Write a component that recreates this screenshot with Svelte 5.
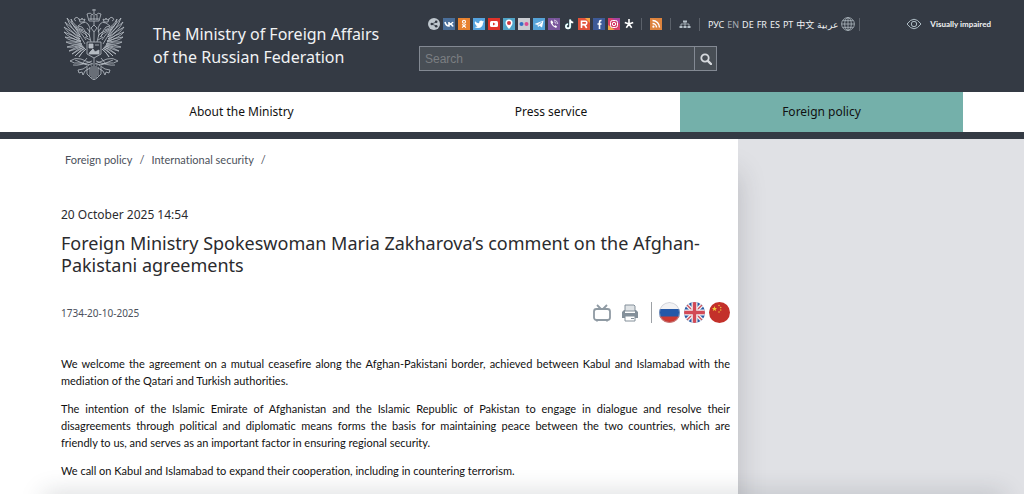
<script lang="ts">
  interface Social {
    name: string;
    bg: string;
  }

  const socials: Social[] = [
    { name: "Share", bg: "transparent" },
    { name: "VK", bg: "#4a6f9b" },
    { name: "Odnoklassniki", bg: "#e8822f" },
    { name: "Twitter", bg: "#55a3df" },
    { name: "YouTube", bg: "#e0332a" },
    { name: "Maps", bg: "#4fa3c7" },
    { name: "Flickr", bg: "#c9ccd2" },
    { name: "Telegram", bg: "#55a3d8" },
    { name: "Viber", bg: "#7a569c" },
    { name: "TikTok", bg: "transparent" },
    { name: "Rutube", bg: "#e2523a" },
    { name: "Facebook", bg: "#3d5a98" },
    { name: "Instagram", bg: "#d6406a" },
    { name: "All accounts", bg: "transparent" },
  ];

  const languages = ["РУС", "EN", "DE", "FR", "ES", "PT", "中文", "عربية"];

  const sections = [
    { title: "About the Ministry", active: false },
    { title: "Press service", active: false },
    { title: "Foreign policy", active: true },
  ];

  const crumbs = ["Foreign policy", "International security"];

  const paragraphs = [
    "We welcome the agreement on a mutual ceasefire along the Afghan-Pakistani border, achieved between Kabul and Islamabad with the mediation of the Qatari and Turkish authorities.",
    "The intention of the Islamic Emirate of Afghanistan and the Islamic Republic of Pakistan to engage in dialogue and resolve their disagreements through political and diplomatic means forms the basis for maintaining peace between the two countries, which are friendly\u00a0to us, and serves as an important factor in ensuring regional security.",
    "We call on Kabul and Islamabad to expand their cooperation, including in countering terrorism.",
  ];

  // feathers of the left wing: root and tip
  const feathers = [
    [17, 27, 4, 10],
    [17, 29, 2, 14],
    [17, 31, 1, 19],
    [18, 33, 1, 24],
    [18, 34, 2, 29],
    [19, 36, 3, 34],
    [19, 37, 4, 39],
    [20, 38, 6, 43],
    [21, 39, 9, 46],
    [22, 40, 12, 48],
    [23, 41, 16, 49],
  ];

  function feather([x1, y1, x2, y2]: number[]) {
    const mx = (x1 + x2) / 2;
    const my = (y1 + y2) / 2;
    return `M${x1} ${y1}Q${mx - 3} ${my + 2} ${x2} ${y2}Q${mx} ${my - 2} ${x1} ${y1}`;
  }

  let query = $state("");
</script>

{#snippet wing()}
  {#each feathers as f}
    <path d={feather(f)} />
  {/each}
  <path d="M8 11q1 8 9 12q5 2 8 6M8 11q4 8 12 11M13 21q6 4 10 11M16 26l6 10M10 17q6 5 12 7" />
  <path d="M15 18l4-3q4-2 6 1l2 4-1 6 2 8M15 18l4 1 3 4 2 6M17 14l-1-3 2 1 1-2 1 2 2-1-1 3z" />
  <path d="M16 11q-2-3-4-1t1 3M24 20l3 4M23 24l4 4M22 29l5 3" />
  <path d="M7 53q5-4 11-2l12 5M7 53q4 3 10 2l12 2M10 57q7 1 19-4M12 52l12 5M24 50l-5 6" />
  <path d="M26 57l-6 4-5 1 1 3 3-1 1 3 2-4 5-3M24 59v7l4 4 3 2M27 59v9M29 58v12" />
{/snippet}

<div class="page">
  <header>
    <a class="emblem" href="#home" aria-label="Home">
      <svg viewBox="0 0 62 72" fill="none" stroke="#b9bfc6" stroke-width="0.8">
        <g>{@render wing()}</g>
        <g transform="translate(62 0) scale(-1 1)">{@render wing()}</g>
        <path d="M26 13l-2-7q4-2 5 1 2-3 4 0 2-3 5-1l-2 7zM26 11h10M28 7v5M34 7v5M31 5V1M29 2h4M31 7v5M31 13v4l-3 3 3 4 3-4-3-3" />
        <path d="M24 34h14v12l-7 4-7-4zM31 50v22M31 24v10" />
        <path d="M26 36h4v4h-4zM32 37h4M27 44l3-3 2 3 4-2v4H26z" fill="#b4bac1" />
      </svg>
    </a>
    <a class="title" href="#home">The Ministry of Foreign Affairs<br />of the Russian Federation</a>

    <div class="tools">
      <div class="toolbar">
        <div class="socials">
          {#each socials as s (s.name)}
            <a class="social" href="#social" aria-label={s.name}>
              <svg viewBox="0 0 12 12" fill="none" stroke="#fff">
                <rect width="12" height="12" fill={s.bg} stroke="none" />
                {#if s.name === "Share"}
                  <circle cx="6" cy="6" r="6" fill="#bfc7ce" stroke="none" />
                  <path d="M8 4L4 6l4 2" stroke="#343a44" stroke-width="0.8" />
                  <g fill="#343a44" stroke="none"><circle cx="8.2" cy="3.7" r="1.3" /><circle cx="3.8" cy="6" r="1.3" /><circle cx="8.2" cy="8.3" r="1.3" /></g>
                {:else if s.name === "VK"}
                  <path d="M2 4q1 4 4 4V4M10 4q-1 2-4 2 3 0 4 2.5" stroke-width="1.6" />
                {:else if s.name === "Odnoklassniki"}
                  <circle cx="6" cy="3.7" r="1.5" stroke-width="1.1" />
                  <path d="M4 6.5q2 1.3 4 0M6 7.2L4.2 9.7M6 7.2l1.8 2.5" stroke-width="1.1" />
                {:else if s.name === "Twitter"}
                  <path d="M1.5 9q2 .1 3-.8-1.5-.3-1.7-1.5-1-.6-1-2 .1-1 .3-1.5 1.6 1.8 3.9 2 0-2.4 2-2.6 1 0 1.5.6l1.3-.4-.6 1 .8-.1-1 1Q10 9.8 5 10 3 10 1.5 9z" fill="#fff" stroke="none" />
                {:else if s.name === "YouTube"}
                  <rect x="2" y="3" width="8" height="6" rx="1.5" fill="#fff" stroke="none" />
                  <path d="M5 4.5v3L7.5 6z" fill="#e0332a" stroke="none" />
                {:else if s.name === "Maps"}
                  <path d="M6 11Q2.5 7 2.5 5a3.5 3.5 0 0 1 7 0Q9.5 7 6 11z" fill="#fff" stroke="none" />
                  <circle cx="6" cy="5" r="2" fill="#cf3940" stroke="none" />
                {:else if s.name === "Flickr"}
                  <circle cx="3.5" cy="6" r="2" fill="#3570c4" stroke="none" />
                  <circle cx="8.5" cy="6" r="2" fill="#dc4b91" stroke="none" />
                {:else if s.name === "Telegram"}
                  <path d="M1.5 6L10.5 2.5 9 9.5 6.3 7.7 5 9.3 4.5 7z" fill="#fff" stroke="none" />
                  <path d="M4.5 7l4.5-3.2-3.5 3.6" stroke="#55a3d8" stroke-width="0.5" />
                {:else if s.name === "Viber"}
                  <path d="M3 2.5q-1 1 0 3 1.6 3.2 4.5 4.2 1 .2 1.7-1L7.5 7.3l-1 .7Q5 7 4.5 5.5l.8-1L4 2.5z" fill="#fff" stroke="none" />
                  <path d="M6 2q3.5.5 3.8 4M6.2 3.8q1.5.3 1.8 2" stroke-width="0.7" />
                {:else if s.name === "TikTok"}
                  <path d="M7.3 1.5v6.8a2.1 2.1 0 1 1-2.1-2.1" stroke="#50c7cb" stroke-width="1.8" />
                  <path d="M7.1 1.5v6.8a2.1 2.1 0 1 1-2.1-2.1M7 2q.5 2.4 3.3 2.5" stroke-width="1.6" />
                {:else if s.name === "Rutube"}
                  <path d="M12 0H7l5 5z" fill="#f4a543" stroke="none" />
                  <path d="M3.5 10V3.2h4q1.3 0 1.3 1.6T7.5 6.6h-4M6.5 6.6L8.7 10" stroke-width="1.6" />
                {:else if s.name === "Facebook"}
                  <path d="M8.5 2.5H8Q6.5 2.5 6.5 4v7M4.5 6h4" stroke-width="1.6" />
                {:else if s.name === "Instagram"}
                  <path d="M0 7v5h7z" fill="#eea345" stroke="none" />
                  <path d="M4 0h8v6z" fill="#a643a1" stroke="none" />
                  <rect x="2.5" y="2.5" width="7" height="7" rx="2" /><circle cx="6" cy="6" r="1.7" />
                {:else}
                  <path d="M6 1v5M6 6L1.8 4.5M6 6l4.2-1.5M6 6l-2.7 3.7M6 6l2.7 3.7" stroke-width="1.6" />
                {/if}
              </svg>
            </a>
          {/each}
        </div>
        <a class="boxed" href="#rss" aria-label="RSS">
          <svg viewBox="0 0 12 12" fill="none" stroke="#fff" stroke-width="1.4">
            <rect width="12" height="12" fill="#dd833d" stroke="none" />
            <path d="M2.5 2.5a7 7 0 0 1 7 7M2.5 5.5a4 4 0 0 1 4 4" />
            <circle cx="3.4" cy="8.7" r="1.1" fill="#fff" stroke="none" />
          </svg>
        </a>
        <a class="boxed" href="#sitemap" aria-label="Site map">
          <svg viewBox="0 0 12 12" fill="#b5c0c8" stroke="#b5c0c8">
            <path d="M6 4v5M2 9V6h8v3" fill="none" stroke-width="0.8" />
            <path d="M4 2.5h4v2H4zM.5 8h3v2h-3zM4.5 8h3v2h-3zM8.5 8h3v2h-3z" stroke="none" />
          </svg>
        </a>
        <nav class="langs" aria-label="Languages">
          {#each languages as lang}
            <a href="#lang" class:current={lang === "EN"}>{lang}</a>
          {/each}
          <svg class="globe" viewBox="0 0 14 14" fill="none" stroke="#aeb9c0" stroke-width="0.8">
            <circle cx="7" cy="7" r="6.4" /><ellipse cx="7" cy="7" rx="3.3" ry="6.4" />
            <path d="M7 .6v12.8M.6 7h12.8M1.6 3.7h10.8M1.6 10.3h10.8" />
          </svg>
        </nav>
      </div>
      <form class="search" onsubmit={(e) => e.preventDefault()}>
        <input type="text" placeholder="Search" aria-label="Search" bind:value={query} />
        <button type="submit" aria-label="Find">
          <svg viewBox="0 0 12 12" fill="none" stroke="#d6d9dd">
            <circle cx="5" cy="5" r="3.7" stroke-width="1.8" />
            <path d="M7.8 7.8L11 11" stroke-width="2.4" stroke-linecap="round" />
          </svg>
        </button>
      </form>
    </div>

    <a class="impaired" href="#impaired">
      <svg viewBox="0 0 16 12" fill="none" stroke="#aebcc4">
        <path d="M1 6q7-9.5 14 0-7 9.5-14 0z" /><circle cx="8" cy="6" r="2.7" />
      </svg>
      Visually impaired
    </a>
  </header>

  <nav class="sections">
    {#each sections as s}
      <a href="#section" class:active={s.active}>{s.title}</a>
    {/each}
  </nav>

  <div class="body">
    <main>
      <nav class="crumbs" aria-label="Breadcrumbs">
        {#each crumbs as c}
          <a href="#crumb">{c}</a><span>/</span>
        {/each}
      </nav>
      <article>
        <time datetime="2025-10-20T14:54">20 October 2025 14:54</time>
        <h1>Foreign Ministry Spokeswoman Maria Zakharova’s comment on the Afghan-Pakistani agreements</h1>
        <div class="meta">
          <span class="number">1734-20-10-2025</span>
          <button type="button" aria-label="Video">
            <svg viewBox="0 0 18 18" fill="none" stroke="#8f9aa3" stroke-width="1.8">
              <rect x="1" y="5" width="16" height="11" rx="2.5" /><path d="M4 1l4 4M14 1l-4 4M4 16v1.5M14 16v1.5" />
            </svg>
          </button>
          <button type="button" aria-label="Print">
            <svg viewBox="0 0 18 18" fill="#84909a">
              <path d="M4 1h9l1 1v5H4z" fill="#dfe3e6" stroke="#84909a" />
              <path d="M1 8l2-2h1v3h10V6h1l2 2v6H1z" />
              <path d="M4 12h10v5H4z" fill="#fff" stroke="#84909a" /><path d="M10 14h3v1h-3z" />
            </svg>
          </button>
          <div class="flags">
            <a href="#ru" aria-label="Русский">
              <svg viewBox="0 0 21 21">
                <path d="M0 0h21v7H0z" fill="#f2f2f4" /><path d="M0 7h21v8H0z" fill="#2458a8" /><path d="M0 14.5h21V21H0z" fill="#cb3932" />
                <circle cx="10.5" cy="10.5" r="10" fill="none" stroke="#b8bcc6" stroke-width="0.6" />
              </svg>
            </a>
            <a href="#en" aria-label="English">
              <svg viewBox="0 0 21 21">
                <path d="M0 0h21v21H0z" fill="#2a5aa4" />
                <path d="M0 0l21 21M21 0L0 21" stroke="#f0f0f3" stroke-width="4" />
                <path d="M0 0l21 21M21 0L0 21" stroke="#cf505b" stroke-width="1.3" />
                <path d="M10.5 0v21M0 10.5h21" stroke="#f0f0f3" stroke-width="6" />
                <path d="M10.5 0v21M0 10.5h21" stroke="#d24a56" stroke-width="3.4" />
              </svg>
            </a>
            <a href="#cn" aria-label="中文">
              <svg viewBox="0 0 21 21">
                <path d="M0 0h21v21H0z" fill="#c3302a" />
                <path d="M5.5 4l.7 1.9h2L6.6 7.1l.6 2-1.7-1.2-1.7 1.2.6-2-1.6-1.2h2z" fill="#f2ce3c" />
                <g fill="#e8b33b"><circle cx="10" cy="3.5" r=".8" /><circle cx="11.7" cy="5.5" r=".8" /><circle cx="11.7" cy="8" r=".8" /><circle cx="10" cy="10" r=".8" /></g>
              </svg>
            </a>
          </div>
        </div>
        <div class="text">
          {#each paragraphs as p}
            <p>{p}</p>
          {/each}
        </div>
      </article>
    </main>
    <aside></aside>
  </div>
  <div class="edge"></div>
</div>

<style>
  :global(body) {
    background: #e0e1e5;
    font-family: "Noto Sans", "Noto Sans CJK SC", sans-serif;
    font-variant-ligatures: none;
    color: #2b2b2e;
  }
  a {
    color: inherit;
    text-decoration: none;
  }
  svg {
    display: block;
  }
  button {
    appearance: none;
    border: 0;
    background: none;
    padding: 0;
    cursor: pointer;
  }
  .page {
    display: flex;
    flex-direction: column;
    min-height: 100vh;
    overflow: hidden;
  }
  header {
    display: grid;
    grid-template-columns: 62px 238px 1fr auto;
    column-gap: 28px;
    align-items: start;
    box-sizing: border-box;
    height: 92px;
    padding: 8px 33px 0 63px;
    background: #343a44;
    color: #f1f2f4;
  }
  .emblem svg {
    width: 62px;
    height: 72px;
  }
  .title {
    padding-top: 15px;
    font-size: 16px;
    line-height: 23px;
    white-space: nowrap;
  }
  .toolbar {
    display: flex;
    align-items: center;
    height: 16px;
    padding: 8px 0 14px 9px;
  }
  .socials {
    display: flex;
    gap: 3px;
    padding-right: 6px;
  }
  .social svg,
  .boxed svg {
    width: 12px;
    height: 12px;
  }
  .boxed,
  .langs {
    padding: 0 8px;
    border-left: 1px solid #5b616a;
  }
  .langs {
    display: flex;
    align-items: center;
    gap: 3px;
    height: 13px;
    border-right: 1px solid #5b616a;
    padding-right: 4px;
    font-size: 9px;
    font-variant-ligatures: normal;
    white-space: nowrap;
  }
  .langs .current {
    color: #a9aeb5;
  }
  .globe {
    width: 14px;
    height: 14px;
  }
  .search {
    display: flex;
    box-sizing: border-box;
    width: 298px;
    height: 25px;
    border: 1px solid #838993;
    background: #484e55;
  }
  .search input {
    flex: 1;
    min-width: 0;
    border: 0;
    padding: 0 5px;
    background: transparent;
    color: #f1f2f4;
    font: 12px "Liberation Sans", sans-serif;
  }
  .search input::placeholder {
    color: #7b7e82;
  }
  .search button {
    display: grid;
    place-items: center;
    width: 22px;
    border-left: 1px solid #838993;
  }
  .search button svg {
    width: 12px;
    height: 12px;
  }
  .impaired {
    display: flex;
    align-items: center;
    gap: 8px;
    height: 16px;
    padding-top: 8px;
    font-family: Lato, sans-serif;
    font-size: 8px;
    font-weight: 700;
    white-space: nowrap;
  }
  .impaired svg {
    width: 16px;
    height: 12px;
  }
  .sections {
    display: grid;
    grid-template-columns: 361fr 258fr 283fr;
    padding: 0 61px;
    background: #fff;
    border-bottom: 7px solid #343a44;
  }
  .sections a {
    font-size: 12px;
    line-height: 40px;
    text-align: center;
    color: #111;
  }
  .sections .active {
    background: #74b0aa;
  }
  .body {
    flex: 1;
    display: grid;
    grid-template-columns: 738fr 286fr;
  }
  main {
    padding: 12px 8px 16px 61px;
    background: #fff;
    box-shadow: 0 34px 26px rgba(50, 50, 60, 0.22);
  }
  .crumbs {
    display: flex;
    gap: 7px;
    padding-left: 4px;
    font-family: Lato, sans-serif;
    font-size: 11px;
    line-height: 18px;
    color: #4b515b;
  }
  time {
    display: block;
    margin-top: 37px;
    font-size: 12px;
    line-height: 18px;
  }
  h1 {
    margin: 8px 0 0;
    font-size: 18px;
    font-weight: 400;
    line-height: 22px;
  }
  .meta {
    display: flex;
    align-items: center;
    gap: 10px;
    margin-top: 26px;
  }
  .meta button svg {
    width: 18px;
    height: 18px;
  }
  .number {
    flex: 1;
    font-size: 10px;
    color: #4b515b;
  }
  .flags {
    display: flex;
    gap: 4px;
    margin-left: 2px;
    padding-left: 7px;
    border-left: 1px solid #9da1a6;
  }
  .flags svg {
    width: 21px;
    height: 21px;
    border-radius: 50%;
  }
  .text {
    margin-top: 32px;
    font-family: Lato, sans-serif;
    font-size: 11px;
    line-height: 17px;
    text-align: justify;
    color: #111;
  }
  p {
    margin: 0 0 11px;
  }
  .edge {
    position: fixed;
    right: 24px;
    bottom: -12px;
    left: 48px;
    height: 8px;
    box-shadow: 0 0 24px 4px rgba(40, 50, 60, 0.22);
  }
</style>
